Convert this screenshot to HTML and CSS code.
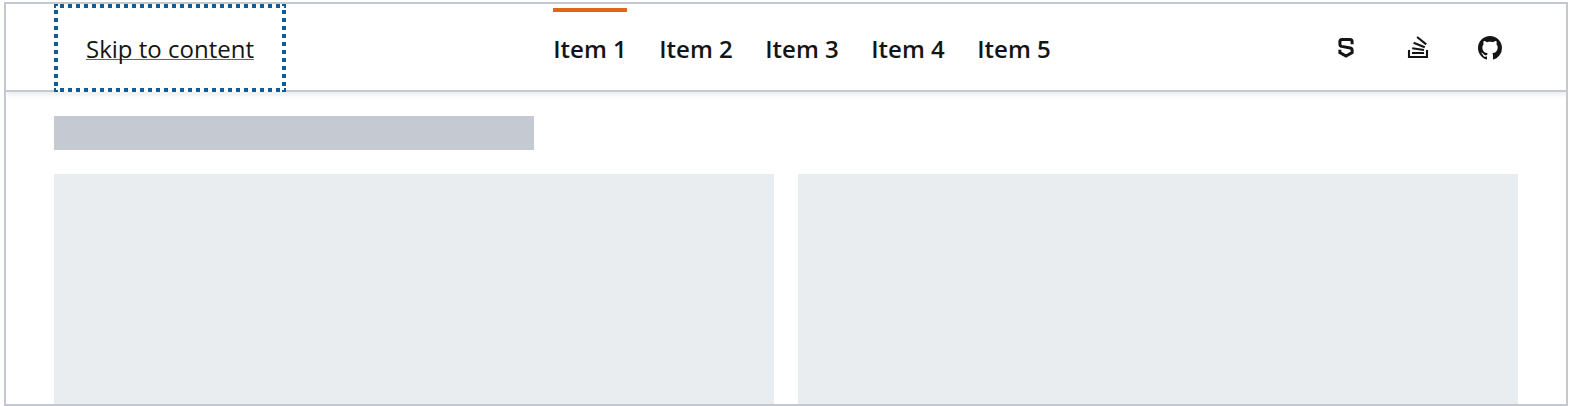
FILE: index.html
```
<!DOCTYPE html>
<html lang="en">
<head>
<meta charset="utf-8">
<title>Skip link</title>
<link rel="stylesheet" href="styles.css">
</head>
<body>
<div class="frame">
  <header class="topbar">
    <a class="skip" href="#content">Skip to content</a>
    <nav class="nav">
      <a class="nav-item active" href="#">Item 1</a>
      <a class="nav-item" href="#">Item 2</a>
      <a class="nav-item" href="#">Item 3</a>
      <a class="nav-item" href="#">Item 4</a>
      <a class="nav-item" href="#">Item 5</a>
    </nav>
    <div class="icons">
      <svg class="icon" viewBox="0 0 24 24"><path d="M18.1 8.3V5.6Q18.1 3.4 15.9 3.4H8.1Q5.9 3.4 5.9 5.6V8.2Q5.9 10 7.7 10.4L16.3 12Q18.1 12.4 18.1 14.2V16.6L12 20L5.9 16.6V13.8" fill="none" stroke="#141414" stroke-width="3"/></svg>
      <svg class="icon" viewBox="0 0 24 24"><path d="M3 14V21H21V14M6 17H18M6.2 12.3L18 14M7.6 6.8L18.8 11.2M11.1 1L20.2 8.4" fill="none" stroke="#141414" stroke-width="2.1"/></svg>
      <svg class="icon" viewBox="0 0 16 16"><path fill="#141414" d="M8 0C3.58 0 0 3.58 0 8c0 3.54 2.29 6.53 5.47 7.59.4.07.55-.17.55-.38 0-.19-.01-.82-.01-1.49-2.01.37-2.53-.49-2.69-.94-.09-.23-.48-.94-.82-1.13-.28-.15-.68-.52-.01-.53.63-.01 1.08.58 1.23.82.72 1.21 1.87.87 2.33.66.07-.52.28-.87.51-1.07-1.78-.2-3.64-.89-3.64-3.95 0-.87.31-1.59.82-2.15-.08-.2-.36-1.02.08-2.12 0 0 .67-.21 2.2.82.64-.18 1.32-.27 2-.27s1.36.09 2 .27c1.53-1.04 2.2-.82 2.2-.82.44 1.1.16 1.92.08 2.12.51.56.82 1.27.82 2.15 0 3.07-1.87 3.75-3.65 3.95.29.25.54.73.54 1.48 0 1.07-.01 1.93-.01 2.2 0 .21.15.46.55.38A8.01 8.01 0 0 0 16 8c0-4.42-3.58-8-8-8z"/></svg>
    </div>
  </header>
  <main class="page" id="content">
    <div class="title-block"></div>
    <div class="columns"><div class="card"></div><div class="card"></div></div>
  </main>
</div>
</body>
</html>
```
FILE: styles.css
```
* { box-sizing: border-box; }
body { margin: 0; background: #fff; font-family: "Open Sans", "Noto Sans", sans-serif; color: #141414; }
.frame { margin: 2px 4px 0; height: 404px; border: 2px solid #c4c8d0; display: flex; flex-direction: column; overflow: hidden; }
.topbar { height: 88px; flex: none; display: flex; padding: 0 48px; border-bottom: 2px solid #c4c8d0; box-shadow: 0 2px 6px rgba(0,0,0,.1); }
.skip {
  width: 232px; height: 88px; display: flex; align-items: center; justify-content: center;
  font-size: 24px; color: inherit;
  text-decoration: underline; text-decoration-color: #666; text-decoration-thickness: 1px;
  text-underline-offset: 1px; text-decoration-skip-ink: none;
  background:
    repeating-linear-gradient(90deg, #0f5c99 0 4px, transparent 4px 8px) -2px 0 / 100% 4px repeat-x,
    repeating-linear-gradient(90deg, #0f5c99 0 4px, transparent 4px 8px) -2px 100% / 100% 4px repeat-x,
    repeating-linear-gradient(#0f5c99 0 4px, transparent 4px 8px) 0 -2px / 4px 100% repeat-y,
    repeating-linear-gradient(#0f5c99 0 4px, transparent 4px 8px) 100% -2px / 4px 100% repeat-y,
    #fff;
}
.nav { display: flex; gap: 32px; margin-left: 267px; }
.nav-item { display: flex; align-items: center; justify-content: center; width: 74px; height: 82px; margin-top: 4px; padding-bottom: 6px; border-top: 4px solid transparent; font-size: 24px; font-weight: 600; color: inherit; text-decoration: none; white-space: nowrap; }
.active { border-color: #e2661a; }
.icons { display: flex; gap: 48px; margin-left: auto; padding: 32px 16px 0 0; }
.icon { width: 24px; height: 24px; display: block; }
.page { padding: 24px 48px 0; flex: 1; display: flex; flex-direction: column; }
.title-block { width: 480px; height: 34px; background: #c5c9d1; }
.columns { flex: 1; margin-top: 24px; display: grid; grid-template-columns: 1fr 1fr; gap: 24px; }
.card { background: #e9edf0; }
```
